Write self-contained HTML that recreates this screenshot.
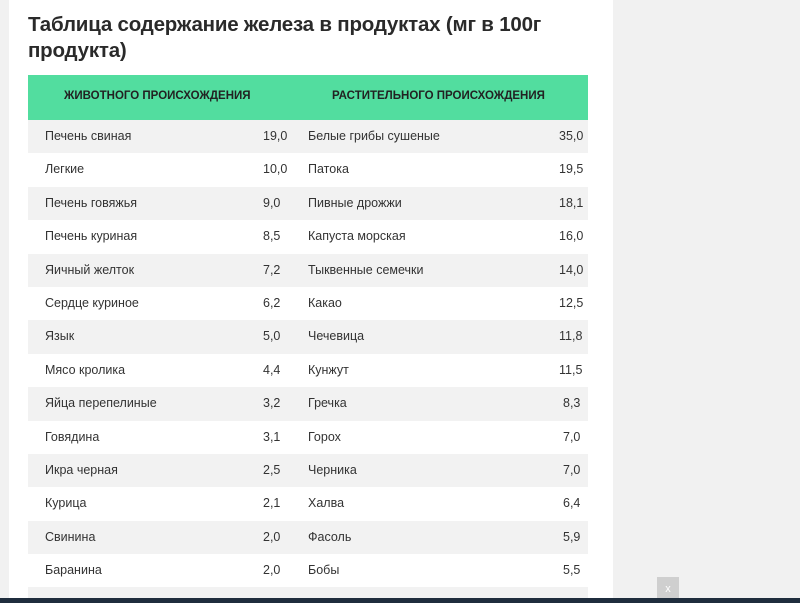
<!DOCTYPE html>
<html style="overflow:hidden;height:603px"><head><meta charset="utf-8"><style>
body{margin:0;width:800px;height:603px;background:#f1f1f1;position:relative;overflow:hidden;font-family:"Liberation Sans","DejaVu Sans",sans-serif;}
.page{position:absolute;left:9px;top:0;width:604px;height:603px;background:#fff;}
h1{position:absolute;left:28px;top:12px;margin:0;font-size:20.5px;line-height:26px;font-weight:bold;color:#2a2a2a;width:560px;letter-spacing:-0.2px}
.tbl{position:absolute;left:28px;top:75px;width:560px;height:523px;overflow:hidden}
.hd{height:45px;background:#52dd9f;position:relative;font-size:11.5px;color:#222;font-weight:bold;}
.hd span{position:absolute;top:15px}
.r{height:33.4px;position:relative;font-size:12.5px;color:#333;}
.r:nth-child(even){background:#f2f2f2}
.r span{position:absolute;top:9px}
.bar{position:absolute;left:0;top:598px;width:800px;height:5px;background:#1f2d3d}
.x{position:absolute;left:657px;top:577px;width:22px;height:21px;background:#cfcfcf;color:#fff;font-size:11px;text-align:center;line-height:24px}
</style></head><body>
<div class="page"></div>
<h1>Таблица содержание железа в продуктах (мг в 100г продукта)</h1>
<div class="tbl">
<div class="hd"><span style="left:36px">ЖИВОТНОГО ПРОИСХОЖДЕНИЯ</span><span style="left:304px">РАСТИТЕЛЬНОГО ПРОИСХОЖДЕНИЯ</span></div>
<div class="r"><span style="left:17px">Печень свиная</span><span style="left:235px">19,0</span><span style="left:280px">Белые грибы сушеные</span><span style="left:531px">35,0</span></div>
<div class="r"><span style="left:17px">Легкие</span><span style="left:235px">10,0</span><span style="left:280px">Патока</span><span style="left:531px">19,5</span></div>
<div class="r"><span style="left:17px">Печень говяжья</span><span style="left:235px">9,0</span><span style="left:280px">Пивные дрожжи</span><span style="left:531px">18,1</span></div>
<div class="r"><span style="left:17px">Печень куриная</span><span style="left:235px">8,5</span><span style="left:280px">Капуста морская</span><span style="left:531px">16,0</span></div>
<div class="r"><span style="left:17px">Яичный желток</span><span style="left:235px">7,2</span><span style="left:280px">Тыквенные семечки</span><span style="left:531px">14,0</span></div>
<div class="r"><span style="left:17px">Сердце куриное</span><span style="left:235px">6,2</span><span style="left:280px">Какао</span><span style="left:531px">12,5</span></div>
<div class="r"><span style="left:17px">Язык</span><span style="left:235px">5,0</span><span style="left:280px">Чечевица</span><span style="left:531px">11,8</span></div>
<div class="r"><span style="left:17px">Мясо кролика</span><span style="left:235px">4,4</span><span style="left:280px">Кунжут</span><span style="left:531px">11,5</span></div>
<div class="r"><span style="left:17px">Яйца перепелиные</span><span style="left:235px">3,2</span><span style="left:280px">Гречка</span><span style="left:535px">8,3</span></div>
<div class="r"><span style="left:17px">Говядина</span><span style="left:235px">3,1</span><span style="left:280px">Горох</span><span style="left:535px">7,0</span></div>
<div class="r"><span style="left:17px">Икра черная</span><span style="left:235px">2,5</span><span style="left:280px">Черника</span><span style="left:535px">7,0</span></div>
<div class="r"><span style="left:17px">Курица</span><span style="left:235px">2,1</span><span style="left:280px">Халва</span><span style="left:535px">6,4</span></div>
<div class="r"><span style="left:17px">Свинина</span><span style="left:235px">2,0</span><span style="left:280px">Фасоль</span><span style="left:535px">5,9</span></div>
<div class="r"><span style="left:17px">Баранина</span><span style="left:235px">2,0</span><span style="left:280px">Бобы</span><span style="left:535px">5,5</span></div>
<div class="r"></div>
</div>
<div class="x">x</div>
<div class="bar"></div>
</body></html>
